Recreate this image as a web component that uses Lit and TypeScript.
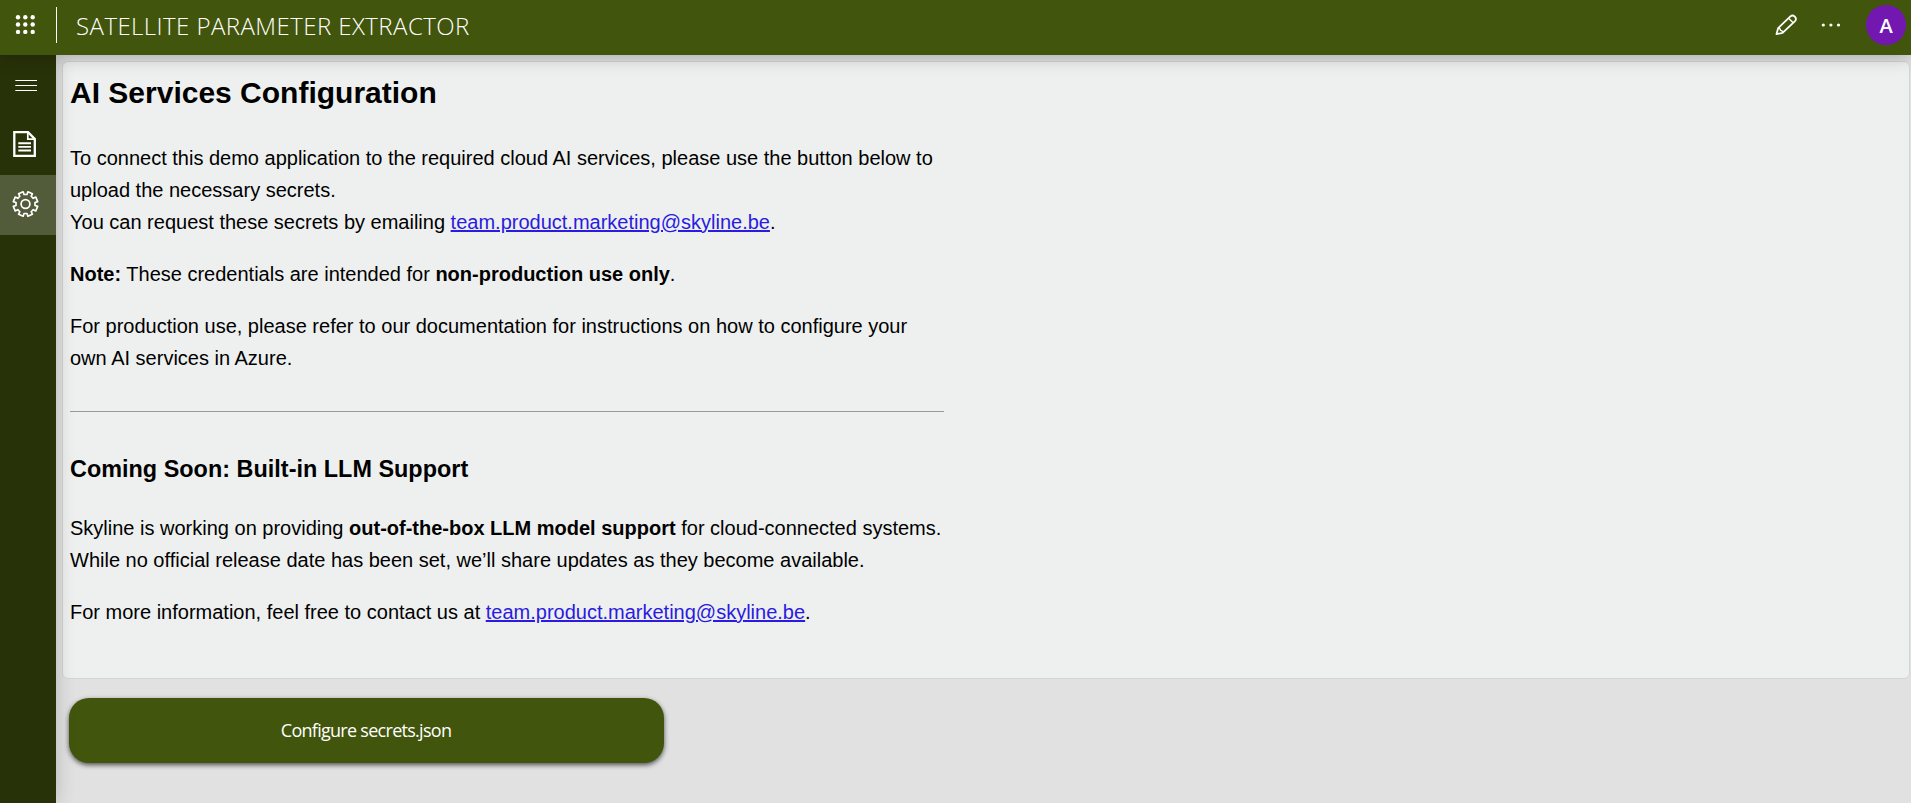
import { LitElement, html, css, svg } from "lit";
import { customElement } from "lit/decorators.js";

const dots = [18, 25.3, 32.7];

// Outline of an eight-toothed cog, centred on the origin.
const gearPath = (() => {
  const pts: string[] = [];
  const step = Math.PI / 4;
  for (let i = 0; i < 8; i++) {
    const a = (i + 0.5) * step - Math.PI / 2;
    for (const [r, o] of [
      [9.6, -0.24],
      [12.4, -0.2],
      [12.4, 0.2],
      [9.6, 0.24],
    ]) {
      pts.push(`${(r * Math.cos(a + o)).toFixed(2)} ${(r * Math.sin(a + o)).toFixed(2)}`);
    }
  }
  return `M${pts.join("L")}Z`;
})();

@customElement("app-root")
export class AppRoot extends LitElement {
  static styles = css`
    :host {
      display: flex;
      flex-direction: column;
      height: 803px;
      overflow: hidden;
      font-family: "Open Sans", "Noto Sans", sans-serif;
      background: #e1e1e1;
    }
    svg { display: block; }
    .header {
      flex: none;
      height: 55px;
      display: flex;
      align-items: flex-start;
      background: #42550c;
      color: #fff;
      box-shadow: 0 0 20px rgba(0, 0, 0, 0.3);
      position: relative;
      z-index: 3;
    }
    .divider { width: 1px; height: 36px; margin-top: 7px; background: #fff; }
    .title {
      flex: 1;
      margin: 0 0 0 19px;
      font-size: 24px;
      font-weight: 300;
      line-height: 51px;
      letter-spacing: 0.44px;
      white-space: nowrap;
    }
    .avatar {
      width: 40px;
      height: 40px;
      margin: 5px 5px 0 0;
      border-radius: 50%;
      background: #7317b1;
      font-size: 20px;
      font-weight: 600;
      line-height: 41px;
      text-align: center;
    }
    .body { flex: 1; display: flex; min-height: 0; }
    .side {
      width: 56px;
      flex: none;
      background: #283209;
      box-shadow: 0 0 20px rgba(0, 0, 0, 0.2);
      position: relative;
      z-index: 2;
    }
    .item { height: 60px; }
    .item.active { background: #535c3a; }
    .main { flex: 1; min-width: 0; padding: 6px 1px 0 6px; }
    .card {
      box-sizing: border-box;
      height: 618px;
      border: 1px solid #d2d3d3;
      border-radius: 6px;
      background: #eef0ef;
      padding: 7px 7px 5px;
      font-family: "Liberation Sans", Arial, sans-serif;
      font-size: 20px;
      line-height: 32px;
      color: #000;
    }
    .text { width: 874px; }
    h2 { margin: 0 0 25px; font-size: 30px; line-height: 48px; }
    p { margin: 0 0 20px; white-space: nowrap; }
    hr { margin: 37px 0 38px; border: 0; height: 1px; background: #999b9a; }
    h3 { margin: 0 0 24px; font-size: 23.4px; line-height: 38px; letter-spacing: 0.02px; }
    a { color: #2a1be0; text-decoration: underline; }
    .button {
      display: block;
      width: 595px;
      height: 65px;
      margin: 19px 0 0 7px;
      padding: 0 1px 2px 0;
      border: 0;
      border-radius: 20px;
      background: #42550c;
      box-shadow: 0 2px 5px rgba(0, 0, 0, 0.65);
      color: #fff;
      font-family: inherit;
      font-size: 18px;
      letter-spacing: -0.72px;
    }
  `;

  render() {
    return html`
      <header class="header">
        <svg width="56" height="55" fill="#fff">
          ${dots.map((y) => dots.map((x) => svg`<circle cx=${x} cy=${y - 0.8} r="2.2" />`))}
        </svg>
        <div class="divider"></div>
        <h1 class="title">SATELLITE PARAMETER EXTRACTOR</h1>
        <svg width="126" height="55" viewBox="1740 0 126 55" fill="none" stroke="#fff">
          <path stroke-width="1.8" stroke-linejoin="round"
            d="M1776.5 34.2L1778.1 28.2L1790.4 16.4Q1792.6 14.6 1794.8 16.6Q1797 18.9 1795 21.1L1782.6 32.8Z" />
          <path stroke-width="1.4" stroke-linejoin="round"
            d="M1788.6 18.2L1793.2 22.7M1778.1 28.2Q1780.6 28 1780.4 30.4Q1782.8 30.3 1782.6 32.8" />
          <g fill="#fff" stroke="none">
            <circle cx="1823.3" cy="25" r="1.6" />
            <circle cx="1830.9" cy="25" r="1.6" />
            <circle cx="1838.5" cy="25" r="1.6" />
          </g>
        </svg>
        <div class="avatar">A</div>
      </header>
      <div class="body">
        <nav class="side">
          <div class="item">
            <svg width="56" height="60" fill="none" stroke="#fff">
              <path stroke-width="1.2" d="M15.3 25.5H37M15.3 30.5H37M15.3 35.5H37" />
            </svg>
          </div>
          <div class="item">
            <svg width="56" height="60" fill="none" stroke="#fff">
              <path stroke-width="2.3" d="M14.3 17.2H28L34.8 24V40.8H14.3Z" />
              <path stroke-width="1.7" d="M27.8 17.5V24.1H34.5" />
              <path stroke-width="1.9" d="M18.3 28.3H31M18.3 31.9H31M18.3 35.5H31" />
            </svg>
          </div>
          <div class="item active">
            <svg width="56" height="60" fill="none" stroke="#fff">
              <g transform="translate(25.5 29)" stroke-width="1.7" stroke-linejoin="round">
                <path d=${gearPath} />
                <circle r="4.4" />
              </g>
            </svg>
          </div>
        </nav>
        <main class="main">
          <section class="card">
            <div class="text">
              <h2>AI Services Configuration</h2>
              <p>
                To connect this demo application to the required cloud AI services, please use the button below to<br />
                upload the necessary secrets.<br />
                You can request these secrets by emailing
                <a href="mailto:team.product.marketing@skyline.be">team.product.marketing@skyline.be</a>.
              </p>
              <p><b>Note:</b> These credentials are intended for <b>non-production use only</b>.</p>
              <p>
                For production use, please refer to our documentation for instructions on how to configure your<br />
                own AI services in Azure.
              </p>
              <hr />
              <h3>Coming Soon: Built-in LLM Support</h3>
              <p>
                Skyline is working on providing <b>out-of-the-box LLM model support</b> for cloud-connected systems.<br />
                While no official release date has been set, we’ll share updates as they become available.
              </p>
              <p>
                For more information, feel free to contact us at
                <a href="mailto:team.product.marketing@skyline.be">team.product.marketing@skyline.be</a>.
              </p>
            </div>
          </section>
          <button class="button">Configure secrets.json</button>
        </main>
      </div>
    `;
  }
}
